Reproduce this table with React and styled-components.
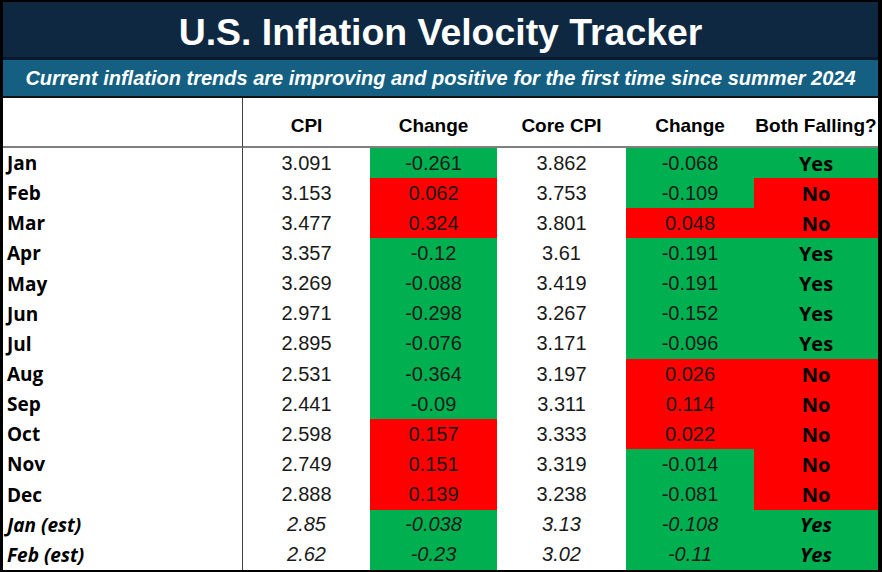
import * as React from "react";
import styled, { createGlobalStyle } from "styled-components";

const GlobalStyle = createGlobalStyle`
  html, body {
    margin: 0;
    padding: 0;
    background: #ffffff;
  }
`;

const GREEN = "#00b050";
const RED = "#ff0000";
const HEAD_FONT = `"Liberation Sans", Arial, sans-serif`;

const Frame = styled.div`
  width: 882px;
  height: 572px;
  box-sizing: border-box;
  border-style: solid;
  border-color: #000;
  border-width: 2px 4px 2px 3px;
  display: flex;
  flex-direction: column;
  background: #fff;
  overflow: hidden;
`;

const TitleBar = styled.div`
  height: 58px;
  background: #0e2841;
  border-bottom: 3px solid #0a1a2c;
  display: flex;
  align-items: center;
  justify-content: center;
  padding-top: 5px;
  box-sizing: border-box;
  color: #fff;
  font-family: ${HEAD_FONT};
  font-weight: 700;
  font-size: 37.4px;
  flex-shrink: 0;
`;

const SubtitleBar = styled.div`
  height: 38px;
  background: #156082;
  border-bottom: 2px solid #111;
  box-sizing: border-box;
  display: flex;
  align-items: center;
  justify-content: center;
  color: #fff;
  font-family: ${HEAD_FONT};
  font-weight: 700;
  font-style: italic;
  font-size: 20px;
  white-space: nowrap;
  flex-shrink: 0;
`;

const Table = styled.div`
  display: grid;
  grid-template-columns: 240px 127px 127px 129px 128px 1fr;
  grid-template-rows: 50px repeat(14, 1fr);
  flex: 1;
`;

const HeadCell = styled.div`
  display: flex;
  align-items: flex-end;
  justify-content: center;
  padding-bottom: 9px;
  box-sizing: border-box;
  border-bottom: 2px solid #7f7f7f;
  border-right: ${(p) => (p.$divider ? "1.5px solid #404040" : "none")};
  font-family: ${HEAD_FONT};
  font-weight: 700;
  font-size: 19px;
  white-space: nowrap;
  color: #000;
`;

const LabelCell = styled.div`
  display: flex;
  align-items: center;
  padding-left: 4px;
  border-right: 1.5px solid #404040;
  font-family: "Open Sans", "Liberation Sans", sans-serif;
  font-weight: 700;
  font-size: 19px;
  font-style: ${(p) => (p.$est ? "italic" : "normal")};
  color: #000;
`;

const NumCell = styled.div`
  display: flex;
  align-items: center;
  justify-content: center;
  background: ${(p) => p.$bg || "transparent"};
  font-family: "Liberation Sans", Arial, sans-serif;
  font-size: 20px;
  font-style: ${(p) => (p.$est ? "italic" : "normal")};
  color: #1a1a1a;
`;

const FlagCell = styled.div`
  display: flex;
  align-items: center;
  justify-content: center;
  background: ${(p) => (p.$yes ? GREEN : RED)};
  font-family: "Open Sans", "Liberation Sans", sans-serif;
  font-weight: 700;
  font-size: 20px;
  font-style: ${(p) => (p.$est ? "italic" : "normal")};
  color: #000;
`;

const rows = [
  ["Jan", "3.091", "-0.261", "3.862", "-0.068"],
  ["Feb", "3.153", "0.062", "3.753", "-0.109"],
  ["Mar", "3.477", "0.324", "3.801", "0.048"],
  ["Apr", "3.357", "-0.12", "3.61", "-0.191"],
  ["May", "3.269", "-0.088", "3.419", "-0.191"],
  ["Jun", "2.971", "-0.298", "3.267", "-0.152"],
  ["Jul", "2.895", "-0.076", "3.171", "-0.096"],
  ["Aug", "2.531", "-0.364", "3.197", "0.026"],
  ["Sep", "2.441", "-0.09", "3.311", "0.114"],
  ["Oct", "2.598", "0.157", "3.333", "0.022"],
  ["Nov", "2.749", "0.151", "3.319", "-0.014"],
  ["Dec", "2.888", "0.139", "3.238", "-0.081"],
  ["Jan (est)", "2.85", "-0.038", "3.13", "-0.108", true],
  ["Feb (est)", "2.62", "-0.23", "3.02", "-0.11", true],
];

const changeColor = (v) => (parseFloat(v) < 0 ? GREEN : RED);

const App = () => {
  return (
    <>
      <GlobalStyle />
      <Frame>
        <TitleBar>U.S. Inflation Velocity Tracker</TitleBar>
        <SubtitleBar>
          Current inflation trends are improving and positive for the first time since summer 2024
        </SubtitleBar>
        <Table>
          <HeadCell $divider />
          <HeadCell>CPI</HeadCell>
          <HeadCell>Change</HeadCell>
          <HeadCell>Core CPI</HeadCell>
          <HeadCell>Change</HeadCell>
          <HeadCell>Both Falling?</HeadCell>
          {rows.map(([label, cpi, chg, core, coreChg, est]) => {
            const both = parseFloat(chg) < 0 && parseFloat(coreChg) < 0;
            return (
              <React.Fragment key={label}>
                <LabelCell $est={est}>{label}</LabelCell>
                <NumCell $est={est}>{cpi}</NumCell>
                <NumCell $est={est} $bg={changeColor(chg)}>
                  {chg}
                </NumCell>
                <NumCell $est={est}>{core}</NumCell>
                <NumCell $est={est} $bg={changeColor(coreChg)}>
                  {coreChg}
                </NumCell>
                <FlagCell $est={est} $yes={both}>
                  {both ? "Yes" : "No"}
                </FlagCell>
              </React.Fragment>
            );
          })}
        </Table>
      </Frame>
    </>
  );
};

export default App;
